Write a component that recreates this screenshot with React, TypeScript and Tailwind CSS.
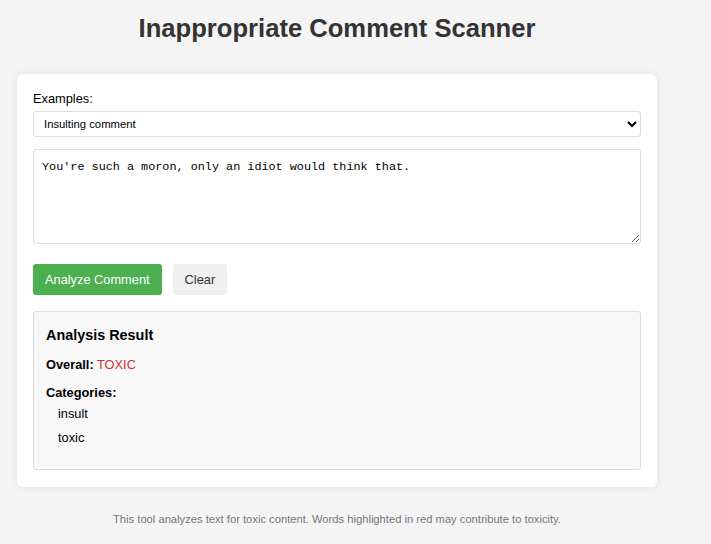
import { useState } from "react";

const EXAMPLES: Record<string, string> = {
  insult: "You're such a moron, only an idiot would think that.",
  neutral: "I think this is a really interesting point of view.",
  threat: "You better watch your back.",
};

export default function App() {
  const [example, setExample] = useState("insult");
  const [text, setText] = useState(EXAMPLES.insult);

  return (
    <div className="min-h-screen bg-[#f4f4f4] font-['Liberation_Sans',Arial,sans-serif] text-black">
      <div className="w-[674px] px-[17px] pt-[14px] pb-6">
        <h1 className="text-center text-[25.6px] leading-[29px] font-bold text-[#333] mb-[31px]">
          Inappropriate Comment Scanner
        </h1>

        <div className="bg-white rounded-[6px] shadow-[0_0_8px_rgba(0,0,0,0.08)] px-4 pt-4 pb-[17px]">
          <label className="block text-[12.8px] leading-[18px] mb-[3px]">Examples:</label>
          <select
            value={example}
            onChange={(e) => {
              setExample(e.target.value);
              setText(EXAMPLES[e.target.value]);
            }}
            className="block w-full h-[26px] border border-[#ddd] rounded-[3px] bg-white px-[6px] text-[11.3px] mb-[12px] outline-none"
          >
            <option value="insult">Insulting comment</option>
            <option value="neutral">Neutral comment</option>
            <option value="threat">Threatening comment</option>
          </select>

          <textarea
            value={text}
            onChange={(e) => setText(e.target.value)}
            className="block w-full h-[95px] border border-[#ddd] rounded-[3px] bg-white px-2 pt-[9px] font-['Liberation_Mono',monospace] text-[11.8px] leading-[16px] mb-5 outline-none"
          />

          <div className="flex gap-[11px] mb-4">
            <button className="h-[31px] px-3 rounded-[3px] bg-[#4caf50] text-white text-[12.8px]">
              Analyze Comment
            </button>
            <button
              onClick={() => setText("")}
              className="h-[31px] px-3 rounded-[3px] bg-[#f0f0f0] text-[#333] text-[12.8px]"
            >
              Clear
            </button>
          </div>

          <div className="border border-[#ddd] rounded-[3px] bg-[#f8f8f8] p-3">
            <h3 className="text-[14.4px] leading-[22px] font-bold mb-[9px]">Analysis Result</h3>
            <p className="text-[12.8px] leading-[20px] mb-2">
              <span className="font-bold">Overall:</span>{" "}
              <span className="text-[#d32f2f]">TOXIC</span>
            </p>
            <p className="text-[12.8px] leading-[20px] font-bold">Categories:</p>
            <ul className="pl-3 mt-[1px] mb-[9px] flex flex-col gap-1 text-[12.8px] leading-[20px]">
              <li>insult</li>
              <li>toxic</li>
            </ul>
          </div>
        </div>

        <p className="mt-6 text-center text-[11.2px] leading-[16px] text-[#777]">
          This tool analyzes text for toxic content. Words highlighted in red may contribute to toxicity.
        </p>
      </div>
    </div>
  );
}
